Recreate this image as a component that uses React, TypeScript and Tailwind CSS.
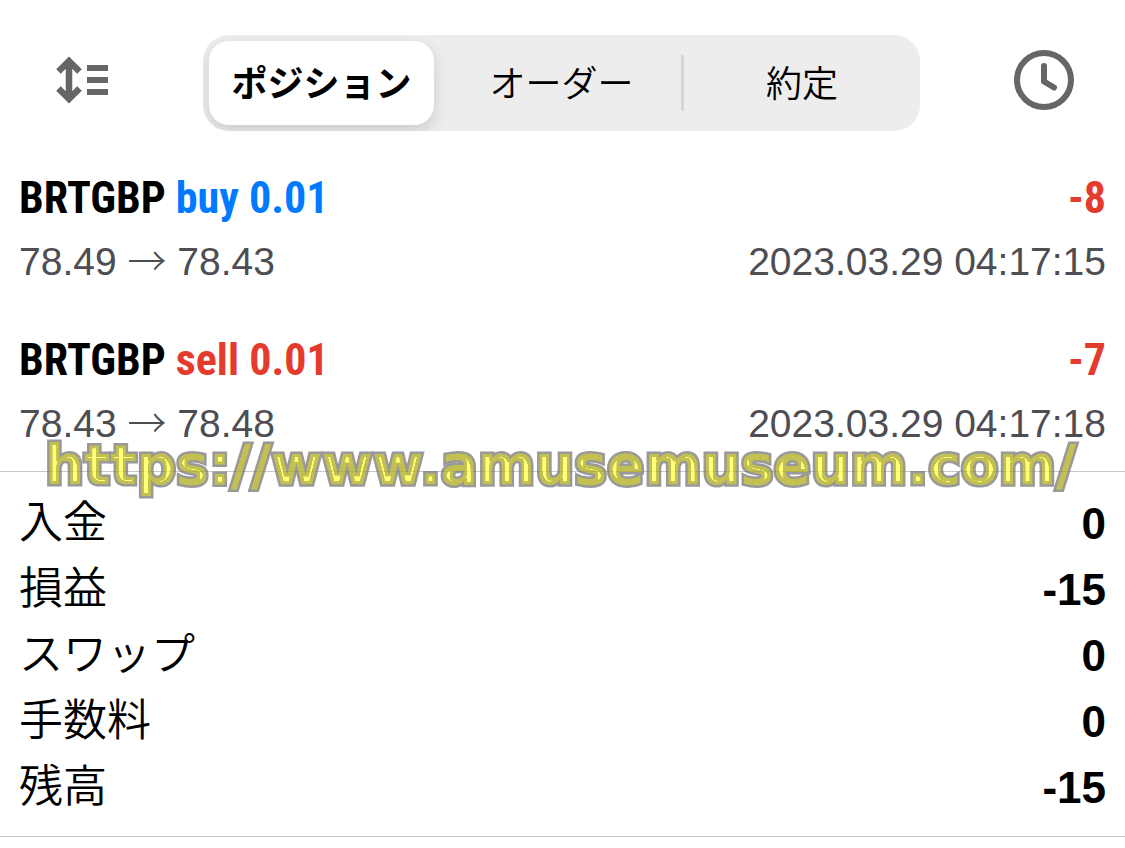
import { useState } from 'react';
import clsx from 'clsx';

const tabs = ['ポジション', 'オーダー', '約定'];

const positions = [
  { symbol: 'BRTGBP', side: 'buy', volume: '0.01', open: '78.49', current: '78.43', profit: '-8', time: '2023.03.29 04:17:15' },
  { symbol: 'BRTGBP', side: 'sell', volume: '0.01', open: '78.43', current: '78.48', profit: '-7', time: '2023.03.29 04:17:18' }
];

const summary = [
  { label: '入金', value: '0' },
  { label: '損益', value: '-15' },
  { label: 'スワップ', value: '0' },
  { label: '手数料', value: '0' },
  { label: '残高', value: '-15' }
];

function SortIcon() {
  return (
    <svg width="54" height="48" viewBox="0 0 54 48" fill="none" stroke="#666666" strokeWidth="6" aria-hidden="true">
      <path d="M14 5v38M3.500 15.500 14 5l10.500 10.500M3.500 32.500 14 43l10.500-10.500" strokeWidth="6.500" />
      <path d="M32 12h21M32 24h21M32 36h21" />
    </svg>
  );
}

function ClockIcon() {
  return (
    <svg width="60" height="60" viewBox="0 0 60 60" fill="none" stroke="#666666" strokeWidth="6" aria-hidden="true">
      <circle cx="30" cy="30" r="27" />
      <path d="M30 16v15.500l10 6" strokeLinecap="round" strokeLinejoin="round" />
    </svg>
  );
}

function Watermark() {
  return (
    <div className="pointer-events-none absolute right-1 -bottom-[26px] left-0 flex justify-center opacity-75">
      {/* Bright ridge running down the middle of each letter, picked out of the fill by its colour */}
      <svg className="absolute" width="0" height="0" aria-hidden="true">
        <filter id="ridge" x="-2%" y="-20%" width="104%" height="140%" colorInterpolationFilters="sRGB">
          <feColorMatrix in="SourceGraphic" values="0 0 0 0 1  0 0 0 0 1  0 0 0 0 0.3  4 0 -4 0 -0.5" result="fill" />
          <feMorphology in="fill" operator="erode" radius="3" result="core" />
          <feGaussianBlur in="core" stdDeviation="0.5" result="light" />
          <feMerge>
            <feMergeNode in="SourceGraphic" />
            <feMergeNode in="light" />
          </feMerge>
        </filter>
      </svg>
      <span className="font-['DejaVu_Sans',sans-serif] text-[55px] leading-[64px] font-bold whitespace-nowrap text-[#afab19] [-webkit-text-stroke:5px_#777777] [filter:url(#ridge)] [paint-order:stroke_fill] [stroke-linejoin:round]">
        https://www.amusemuseum.com/
      </span>
    </div>
  );
}

export default function App() {
  const [active, setActive] = useState(0);

  return (
    <main className="min-h-screen bg-white font-['Liberation_Sans','Noto_Sans_CJK_JP',sans-serif] text-black">
      <header className="flex items-center justify-between pt-[35px] pr-[51px] pb-4 pl-[55px]">
        <button type="button" aria-label="並べ替え" className="pb-[6px]">
          <SortIcon />
        </button>
        <div role="tablist" className="grid h-24 w-[70.400%] max-w-[717px] grid-cols-3 overflow-hidden rounded-[26px] bg-[#ededee]">
          {tabs.map((tab, index) => (
            <button
              key={tab}
              type="button"
              role="tab"
              aria-selected={active === index}
              onClick={() => setActive(index)}
              className={clsx(
                "pb-1 font-['Noto_Sans_CJK_JP',sans-serif] text-[36px] leading-none",
                active === index
                  ? 'my-[6px] mr-2 ml-[6px] rounded-[20px] bg-white font-bold shadow-[0_6px_16px_rgba(0,0,0,0.14)]'
                  : 'font-[350]',
                index === 2 && active !== 2 && 'my-5 border-l-3 border-[#d5d5d8]'
              )}
            >
              {tab}
            </button>
          ))}
        </div>
        <button type="button" aria-label="履歴" className="pb-[6px]">
          <ClockIcon />
        </button>
      </header>

      <section className="relative border-b border-[#c8c8c8] px-[19px]">
        {positions.map((position) => (
          <article key={position.time} className="py-5">
            <div className="flex items-center justify-between font-['Roboto_Condensed','Liberation_Sans_Narrow',sans-serif] text-[44px] leading-[62px] font-bold">
              <h2>
                {position.symbol}{' '}
                <span className={position.side === 'buy' ? 'text-[#007aff]' : 'text-[#e53b2c]'}>
                  {position.side} {position.volume}
                </span>
              </h2>
              <span className="text-[#e53b2c]">{position.profit}</span>
            </div>
            <div className="flex items-center justify-between pt-[6px] text-[39px] leading-[54px] text-[#4d4d52]">
              <span>
                {position.open} <span className="font-['Noto_Sans_CJK_JP',sans-serif] leading-none font-light">→</span> {position.current}
              </span>
              <time>{position.time}</time>
            </div>
          </article>
        ))}
        <Watermark />
      </section>

      <dl className="border-b border-[#c8c8c8] px-[19px] pt-[19px] pb-[15px]">
        {summary.map((item) => (
          <div key={item.label} className="flex items-start justify-between text-[44px] leading-[66px]">
            <dt className="font-['Noto_Sans_CJK_JP',sans-serif] leading-[56px] font-[350]">{item.label}</dt>
            <dd className="font-bold">{item.value}</dd>
          </div>
        ))}
      </dl>
    </main>
  );
}
